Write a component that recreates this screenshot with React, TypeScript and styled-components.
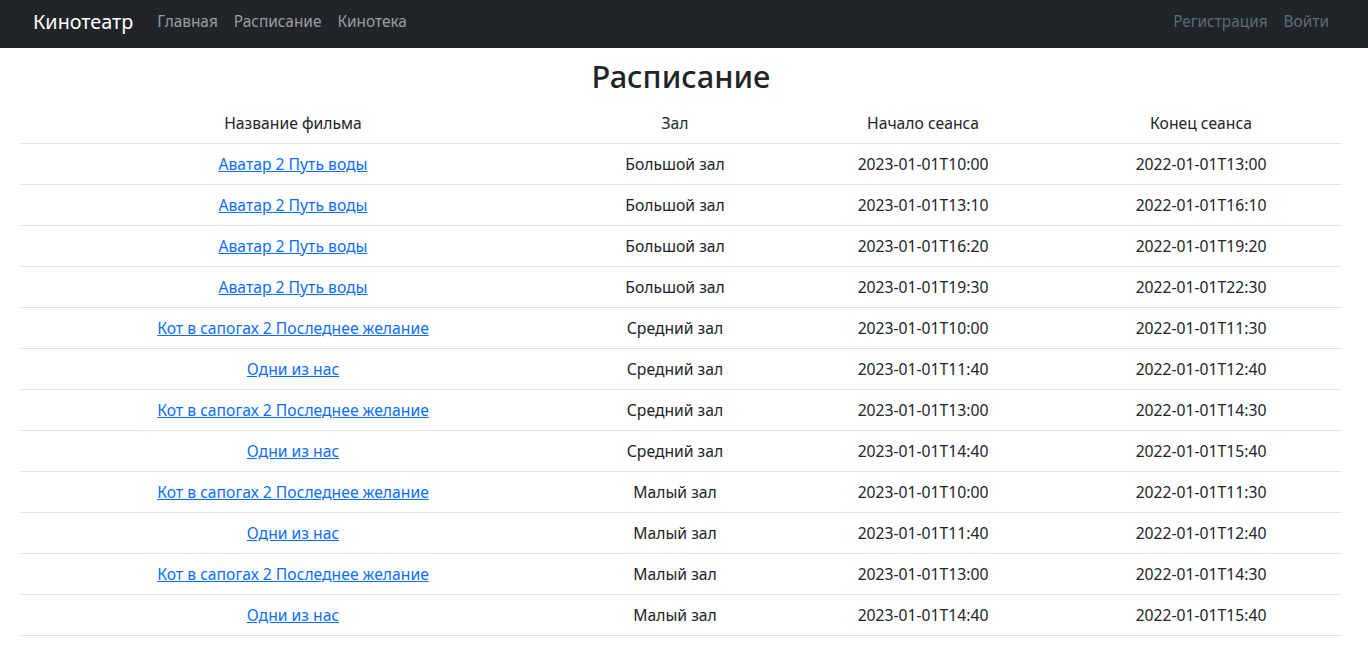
import React from 'react';
import styled, { createGlobalStyle } from 'styled-components';

const GlobalStyle = createGlobalStyle`
  body {
    margin: 0;
    background: #fff;
    color: #212529;
    font-family: "Noto Sans", "Open Sans", sans-serif;
    font-size: 16px;
  }
`;

const Navbar = styled.nav`
  height: 48px;
  background: #212529;
  display: flex;
  align-items: center;
  padding: 0 31px 6px 33px;
  box-sizing: border-box;
`;

const Brand = styled.a`
  color: #fff;
  font-size: 19.8px;
  text-decoration: none;
  margin-right: 16px;
`;

const NavList = styled.div<{ $right?: boolean }>`
  display: flex;
  margin-left: ${p => (p.$right ? 'auto' : '0')};
`;

const NavLink = styled.a<{ $muted?: boolean }>`
  color: ${p => (p.$muted ? '#5b6b7b' : 'rgba(255,255,255,0.55)')};
  font-size: 15.4px;
  text-decoration: none;
  padding: 0 8px;
`;

const Main = styled.main`
  padding: 0 27px 0 21px;
`;

const Title = styled.h2`
  margin: 9px 0 8px;
  text-align: center;
  font-size: 30.8px;
  font-weight: 500;
  line-height: 38px;
`;

const Table = styled.table`
  width: 100%;
  border-collapse: collapse;
  table-layout: fixed;
  text-align: center;
  font-size: 15.7px;
`;

const Cell = styled.td`
  padding: 8px;
  line-height: 24px;
  border-bottom: 1px solid #dee2e6;
`;

const Head = styled.th`
  padding: 8px;
  line-height: 24px;
  font-weight: 400;
  border-bottom: 1px solid #dee2e6;
`;

const FilmLink = styled.a`
  color: #0d6efd;
  text-decoration: underline;
`;

const rows: [string, string, string, string][] = [
  ['Аватар 2 Путь воды', 'Большой зал', '2023-01-01T10:00', '2022-01-01T13:00'],
  ['Аватар 2 Путь воды', 'Большой зал', '2023-01-01T13:10', '2022-01-01T16:10'],
  ['Аватар 2 Путь воды', 'Большой зал', '2023-01-01T16:20', '2022-01-01T19:20'],
  ['Аватар 2 Путь воды', 'Большой зал', '2023-01-01T19:30', '2022-01-01T22:30'],
  ['Кот в сапогах 2 Последнее желание', 'Средний зал', '2023-01-01T10:00', '2022-01-01T11:30'],
  ['Одни из нас', 'Средний зал', '2023-01-01T11:40', '2022-01-01T12:40'],
  ['Кот в сапогах 2 Последнее желание', 'Средний зал', '2023-01-01T13:00', '2022-01-01T14:30'],
  ['Одни из нас', 'Средний зал', '2023-01-01T14:40', '2022-01-01T15:40'],
  ['Кот в сапогах 2 Последнее желание', 'Малый зал', '2023-01-01T10:00', '2022-01-01T11:30'],
  ['Одни из нас', 'Малый зал', '2023-01-01T11:40', '2022-01-01T12:40'],
  ['Кот в сапогах 2 Последнее желание', 'Малый зал', '2023-01-01T13:00', '2022-01-01T14:30'],
  ['Одни из нас', 'Малый зал', '2023-01-01T14:40', '2022-01-01T15:40'],
];

export default function App() {
  return (
    <>
      <GlobalStyle />
      <Navbar>
        <Brand href="#">Кинотеатр</Brand>
        <NavList>
          <NavLink href="#">Главная</NavLink>
          <NavLink href="#">Расписание</NavLink>
          <NavLink href="#">Кинотека</NavLink>
        </NavList>
        <NavList $right>
          <NavLink $muted href="#">Регистрация</NavLink>
          <NavLink $muted href="#">Войти</NavLink>
        </NavList>
      </Navbar>
      <Main>
        <Title>Расписание</Title>
        <Table>
          <colgroup>
            <col style={{ width: 544 }} />
            <col style={{ width: 220 }} />
            <col style={{ width: 276 }} />
            <col style={{ width: 280 }} />
          </colgroup>
          <thead>
            <tr>
              <Head>Название фильма</Head>
              <Head>Зал</Head>
              <Head>Начало сеанса</Head>
              <Head>Конец сеанса</Head>
            </tr>
          </thead>
          <tbody>
            {rows.map((r, i) => (
              <tr key={i}>
                <Cell><FilmLink href="#">{r[0]}</FilmLink></Cell>
                <Cell>{r[1]}</Cell>
                <Cell>{r[2]}</Cell>
                <Cell>{r[3]}</Cell>
              </tr>
            ))}
          </tbody>
        </Table>
      </Main>
    </>
  );
}
